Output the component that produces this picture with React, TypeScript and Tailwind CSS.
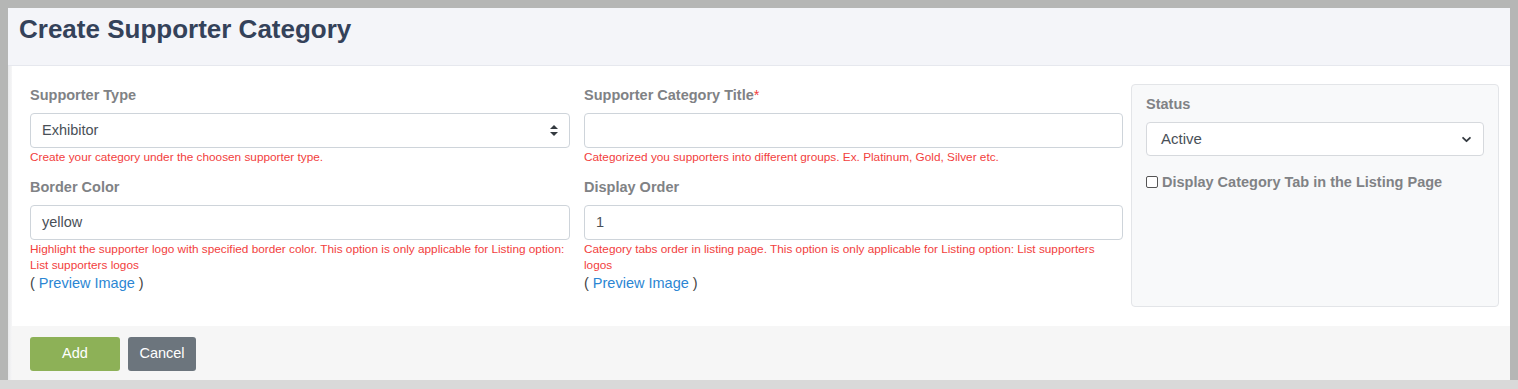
import React from "react";

function SpinnerArrows() {
  return (
    <svg width="8" height="11" viewBox="0 0 8 11" className="text-[#343a40]">
      <path d="M4 0 L8 4 H0 Z" fill="currentColor" />
      <path d="M4 11 L8 7 H0 Z" fill="currentColor" />
    </svg>
  );
}

function ChevronDown() {
  return (
    <svg width="11" height="11" viewBox="0 0 16 16" className="text-[#343a40]">
      <path d="M3 5.5 L8 10.5 L13 5.5" fill="none" stroke="currentColor" strokeWidth="2.6" strokeLinecap="round" strokeLinejoin="round" />
    </svg>
  );
}

function Label({ children }: { children: React.ReactNode }) {
  return <div className="text-[14.5px] font-bold leading-[20px] text-[#808285]">{children}</div>;
}

function Help({ children }: { children: React.ReactNode }) {
  return <div className="mt-[1px] text-[11.8px] leading-[16px] text-[#f2403d]">{children}</div>;
}

function TextBox({ value }: { value: string }) {
  return (
    <div className="mt-[8px] flex h-[35px] items-center rounded-[4px] border border-[#ced4da] bg-white px-[11px] text-[14.5px] text-[#495057]">
      {value}
    </div>
  );
}

function Preview() {
  return (
    <div className="text-[14.5px] leading-[20px] text-[#444]">
      ( <span className="text-[#2b86d3]">Preview Image</span> )
    </div>
  );
}

export default function App() {
  return (
    <div className="min-h-[389px] bg-[#b5b6b5] pl-[8px] pr-[8px] pt-[8px] font-['Liberation_Sans',Arial,sans-serif]">
      <div className="bg-[#f4f5f9]">
        <div className="h-[58px] border-b border-[#e6e8ee] pl-[11px] pt-[5px]">
          <h1 className="text-[26px] font-bold leading-[32px] text-[#34425a]">Create Supporter Category</h1>
        </div>
        <div className="flex">
          <div className="w-[4px] bg-gradient-to-r from-[#e9eaec] to-[#f6f6f7]" />
          <div className="flex-1">
            <div className="flex bg-white pb-[19px] pl-[18px] pr-[11px] pt-[18px]">
              <div className="w-[540px] pt-[1px]">
                <Label>Supporter Type</Label>
                <div className="mt-[8px] flex h-[35px] items-center justify-between rounded-[4px] border border-[#ced4da] bg-white pl-[11px] pr-[11px] text-[14.5px] text-[#495057]">
                  <span>Exhibitor</span>
                  <SpinnerArrows />
                </div>
                <Help>Create your category under the choosen supporter type.</Help>
                <div className="mt-[12px]">
                  <Label>Border Color</Label>
                </div>
                <TextBox value="yellow" />
                <Help>
                  Highlight the supporter logo with specified border color. This option is only applicable for Listing option:
                  List supporters logos
                </Help>
                <Preview />
              </div>
              <div className="ml-[14px] w-[539px] pt-[1px]">
                <Label>
                  Supporter Category Title<span className="font-normal text-[#f2403d]">*</span>
                </Label>
                <TextBox value="" />
                <Help>Categorized you supporters into different groups. Ex. Platinum, Gold, Silver etc.</Help>
                <div className="mt-[12px]">
                  <Label>Display Order</Label>
                </div>
                <TextBox value="1" />
                <Help>
                  Category tabs order in listing page. This option is only applicable for Listing option: List supporters
                  logos
                </Help>
                <Preview />
              </div>
              <div className="ml-[8px] h-[223px] w-[368px] rounded-[4px] border border-[#e3e5e8] bg-[#f8f9fa] px-[14px] pt-[9px]">
                <Label>Status</Label>
                <div className="mt-[8px] flex h-[34px] items-center justify-between rounded-[4px] border border-[#d6d9dd] bg-white pl-[14px] pr-[11px] text-[15px] text-[#495057]">
                  <span>Active</span>
                  <ChevronDown />
                </div>
                <label className="mt-[16px] flex items-center gap-[4px]">
                  <span className="h-[12px] w-[12px] rounded-[2px] border border-[#555] bg-white" />
                  <span className="text-[14.5px] font-bold leading-[20px] text-[#808285]">Display Category Tab in the Listing Page</span>
                </label>
              </div>
            </div>
            <div className="flex h-[54px] gap-[8px] bg-[#f6f6f6] pl-[18px] pt-[11px]">
              <button className="h-[34px] w-[90px] rounded-[3px] bg-[#8db157] text-[14.5px] text-white">Add</button>
              <button className="h-[34px] w-[68px] rounded-[3px] bg-[#6c757d] text-[14.5px] text-white">Cancel</button>
            </div>
          </div>
        </div>
      </div>
      <div className="-mx-[8px] h-[9px] bg-[#d9d9d9]" />
    </div>
  );
}
